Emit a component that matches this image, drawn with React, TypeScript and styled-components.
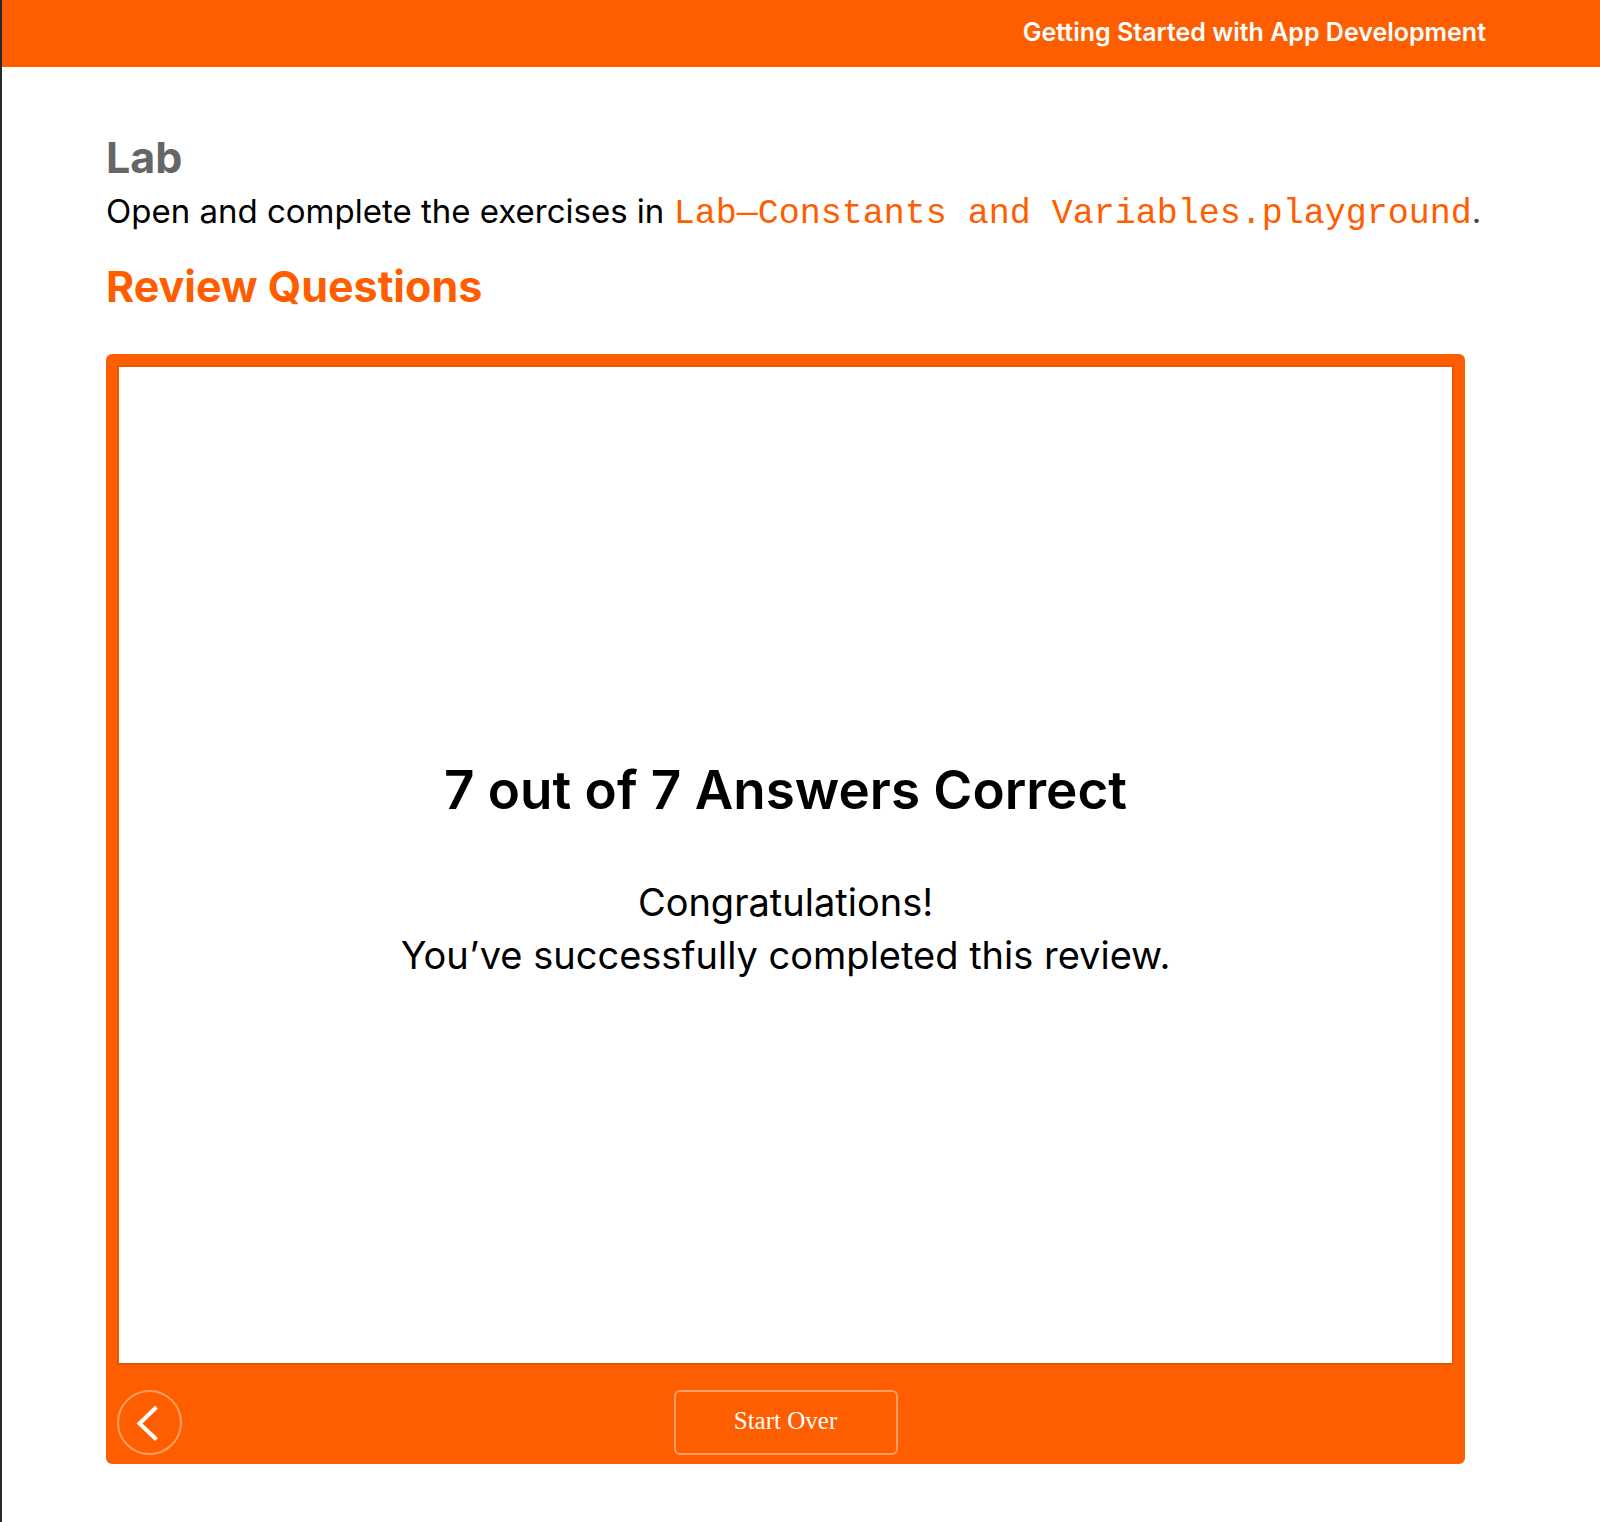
import React from "react";
import styled, { createGlobalStyle } from "styled-components";

const orange = "#ff5e00";
const sans = `Inter, "Liberation Sans", sans-serif`;

const GlobalStyle = createGlobalStyle`
  *, *::before, *::after { box-sizing: border-box; }
  body { margin: 0; background: #fff; }
`;

const Page = styled.div`
  min-height: 100vh;
  border-left: 2px solid #24292d;
  background: #fff;
  color: #000;
  font-family: ${sans};
`;

const Banner = styled.header`
  display: flex;
  align-items: center;
  justify-content: flex-end;
  height: 67px;
  padding: 0 114px 4px 104px;
  background: ${orange};
  color: #fff;
  font-size: 25px;
  line-height: 32px;
  font-weight: 600;
`;

const Content = styled.main`
  padding: 62px 104px 58px 104px;
`;

const SectionTitle = styled.h2<{ $color: string }>`
  margin: 0;
  color: ${(p) => p.$color};
  font-size: 43px;
  line-height: 56px;
  font-weight: 700;
`;

const Paragraph = styled.p`
  margin: 0 0 20px;
  font-size: 33px;
  line-height: 53px;
`;

const FileLink = styled.a`
  color: ${orange};
  font-family: "Liberation Mono", monospace;
  font-size: 35px;
  line-height: 1;
  text-decoration: none;
`;

const FullStop = styled.span`
  color: #444;
`;

const Quiz = styled.section`
  display: flex;
  flex-direction: column;
  margin: 40px 31px 0 0;
  padding: 11px 11px 9px;
  border-radius: 6px;
  background: ${orange};
`;

const Result = styled.div`
  display: flex;
  flex-direction: column;
  align-items: center;
  justify-content: center;
  gap: 54px;
  min-height: 1000px;
  padding-top: 9px;
  border: 2px solid #e95600;
  background: #fff;
  text-align: center;
`;

const Score = styled.h3`
  margin: 0;
  font-size: 53px;
  line-height: 64px;
  font-weight: 600;
`;

const Message = styled.p`
  margin: 0;
  font-size: 38px;
  line-height: 53px;
`;

const Controls = styled.nav`
  display: grid;
  grid-template-columns: 1fr auto 1fr;
  align-items: center;
  padding-top: 25px;
`;

const Button = styled.button<{ $round?: boolean }>`
  display: flex;
  align-items: center;
  justify-content: center;
  width: ${(p) => (p.$round ? "65px" : "224px")};
  height: 65px;
  padding: ${(p) => (p.$round ? "0" : "0 0 4px")};
  border: 2px solid #ff9f66;
  border-radius: ${(p) => (p.$round ? "50%" : "6px")};
  background: transparent;
  color: #fff;
  font-family: "Liberation Serif", serif;
  font-size: 25px;
  line-height: 32px;
  cursor: pointer;
`;

const BackIcon = () => (
  <svg width="37" height="37" viewBox="0 0 37 37" fill="none" aria-hidden="true">
    <path d="M25.5 3 8.5 19.5 25.5 35.5" stroke="currentColor" strokeWidth="4" />
  </svg>
);

export default function App() {
  return (
    <>
      <GlobalStyle />
      <Page>
        <Banner>Getting Started with App Development</Banner>
        <Content>
          <SectionTitle $color="#666">Lab</SectionTitle>
          <Paragraph>
            Open and complete the exercises in{" "}
            <FileLink href="#lab">Lab—Constants and Variables.playground</FileLink>
            <FullStop>.</FullStop>
          </Paragraph>
          <SectionTitle $color={orange}>Review Questions</SectionTitle>
          <Quiz>
            <Result>
              <Score>7 out of 7 Answers Correct</Score>
              <Message>
                Congratulations!
                <br />
                You’ve successfully completed this review.
              </Message>
            </Result>
            <Controls>
              <Button $round type="button" aria-label="Previous">
                <BackIcon />
              </Button>
              <Button type="button">Start Over</Button>
            </Controls>
          </Quiz>
        </Content>
      </Page>
    </>
  );
}
